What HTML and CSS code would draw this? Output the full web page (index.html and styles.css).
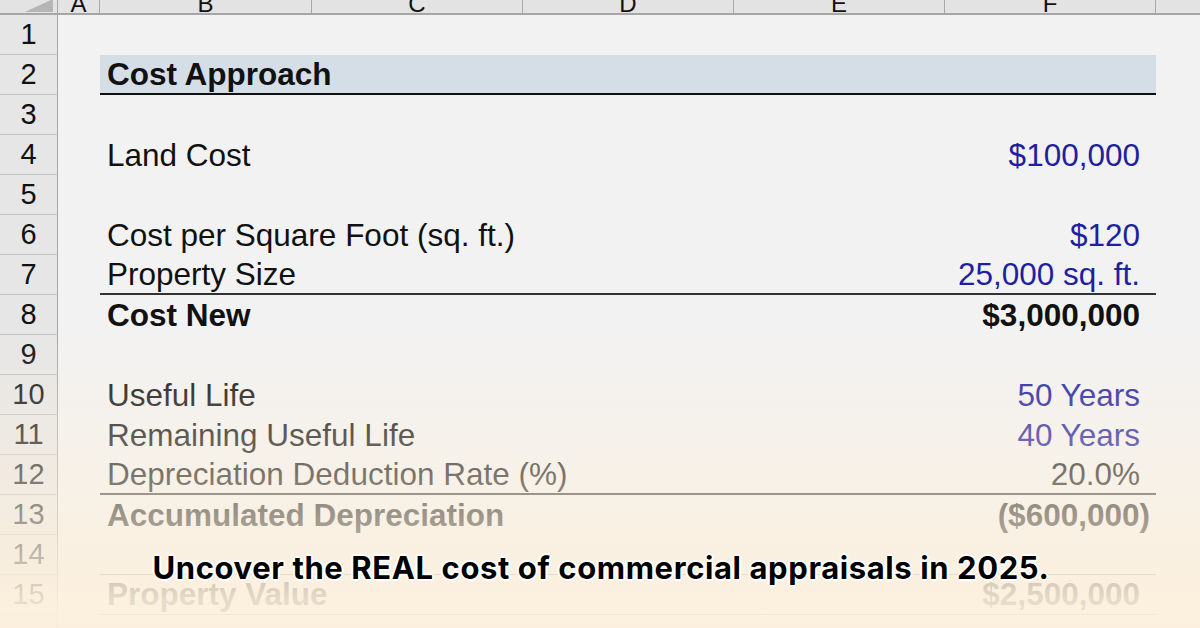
FILE: index.html
```html
<!DOCTYPE html>
<html>
<head>
<meta charset="utf-8">
<link rel="stylesheet" href="styles.css">
</head>
<body>
<div class="page">
  <div class="sheet">
    <div class="row head">
      <div class="corner"><div class="tri"></div></div>
      <div class="colh"><span>A</span></div>
      <div class="colh"><span>B</span></div>
      <div class="colh"><span>C</span></div>
      <div class="colh"><span>D</span></div>
      <div class="colh"><span>E</span></div>
      <div class="colh"><span>F</span></div>
      <div class="colh last"></div>
    </div>

    <div class="row"><div class="rh">1</div><div class="cells"></div></div>
    <div class="row"><div class="rh">2</div><div class="cells title"><span class="lbl b">Cost Approach</span></div></div>
    <div class="row"><div class="rh">3</div><div class="cells"></div></div>
    <div class="row"><div class="rh">4</div><div class="cells"><span class="lbl">Land Cost</span><span class="val blue">$100,000</span></div></div>
    <div class="row"><div class="rh">5</div><div class="cells"></div></div>
    <div class="row"><div class="rh">6</div><div class="cells"><span class="lbl">Cost per Square Foot (sq. ft.)</span><span class="val blue">$120</span></div></div>
    <div class="row"><div class="rh">7</div><div class="cells line"><span class="lbl">Property Size</span><span class="val blue">25,000 sq. ft.</span></div></div>
    <div class="row"><div class="rh">8</div><div class="cells"><span class="lbl b">Cost New</span><span class="val b">$3,000,000</span></div></div>
    <div class="row"><div class="rh">9</div><div class="cells"></div></div>
    <div class="row"><div class="rh">10</div><div class="cells"><span class="lbl">Useful Life</span><span class="val blue">50 Years</span></div></div>
    <div class="row"><div class="rh">11</div><div class="cells"><span class="lbl">Remaining Useful Life</span><span class="val blue">40 Years</span></div></div>
    <div class="row"><div class="rh">12</div><div class="cells line"><span class="lbl">Depreciation Deduction Rate (%)</span><span class="val">20.0%</span></div></div>
    <div class="row"><div class="rh">13</div><div class="cells"><span class="lbl b">Accumulated Depreciation</span><span class="val b paren">($600,000)</span></div></div>
    <div class="row"><div class="rh">14</div><div class="cells thin"></div></div>
    <div class="row"><div class="rh">15</div><div class="cells thin"><span class="lbl b">Property Value</span><span class="val b">$2,500,000</span></div></div>
    <div class="row"><div class="rh"></div><div class="cells"></div></div>
  </div>
  <div class="fade"></div>
  <div class="caption">Uncover the REAL cost of commercial appraisals in 2025.</div>
</div>
</body>
</html>
```

FILE: styles.css
```css
* { box-sizing: border-box; }
html, body { margin: 0; padding: 0; }
body {
  width: 1200px;
  height: 628px;
  overflow: hidden;
  background: #f2f2f2;
  font-family: "Liberation Sans", Arial, sans-serif;
  color: #111;
}
.page {
  position: relative;
  width: 1200px;
  height: 628px;
  overflow: hidden;
}
.sheet {
  display: flex;
  flex-direction: column;
}
.row {
  display: grid;
  grid-template-columns: 58px 42px 212px 211px 211px 211px 211px 44px;
  height: 40px;
}
.row.head {
  height: 15px;
  background: #e3e3e3;
  border-bottom: 2px solid #a6a6a6;
}
.corner {
  position: relative;
  border-right: 1px solid #a6a6a6;
  overflow: hidden;
}
.tri {
  position: absolute;
  right: 4px;
  bottom: 1px;
  width: 28px;
  height: 13px;
  background: #b5b5b5;
  clip-path: polygon(100% 0, 100% 100%, 0 100%);
}
.colh {
  border-right: 1px solid #a9a9a9;
  overflow: hidden;
  text-align: center;
  font-size: 24px;
  line-height: 24px;
  color: #111;
}
.colh span {
  display: block;
  margin-top: -8px;
}
.colh.last { border-right: none; }
.rh {
  background: #e6e6e6;
  border-right: 1px solid #a6a6a6;
  border-bottom: 1px solid #c4c4c4;
  font-size: 29px;
  line-height: 39px;
  text-align: center;
  color: #111;
}
.cells {
  grid-column: 3 / 8;
  padding: 0 16px 0 7px;
  display: flex;
  align-items: center;
  justify-content: space-between;
  font-size: 31.5px;
  white-space: nowrap;
}
.cells.title {
  background: #d5dee7;
  border-bottom: 2px solid #111;
}
.cells.line {
  border-bottom: 2px solid #333;
}
.cells.thin {
  border-bottom: 1px solid #888;
}
.b { font-weight: bold; }
.blue { color: #1f1fa0; }
.val.paren { margin-right: -10px; }
.fade {
  position: absolute;
  inset: 0;
  pointer-events: none;
  background: linear-gradient(to bottom,
    rgba(253, 240, 220, 0) 0,
    rgba(253, 240, 220, 0) 330px,
    rgba(253, 240, 220, 0.45) 476px,
    rgba(253, 240, 220, 0.9) 600px,
    rgba(253, 240, 220, 0.93) 628px);
}
.caption {
  position: absolute;
  left: 0;
  right: 0;
  top: 548px;
  text-align: center;
  padding-left: 2px;
  font-family: Inter, "Noto Sans", sans-serif;
  font-weight: 700;
  font-size: 31px;
  line-height: 40px;
  color: #000;
  letter-spacing: 0.6px;
  text-shadow:
    0 0 2px #fff, 0 0 2px #fff, 0 0 3px #fff,
    1px 1px 0 #fff, -1px -1px 0 #fff, 1px -1px 0 #fff, -1px 1px 0 #fff,
    2px 0 0 #fff, -2px 0 0 #fff, 0 2px 0 #fff, 0 -2px 0 #fff;
}
```
